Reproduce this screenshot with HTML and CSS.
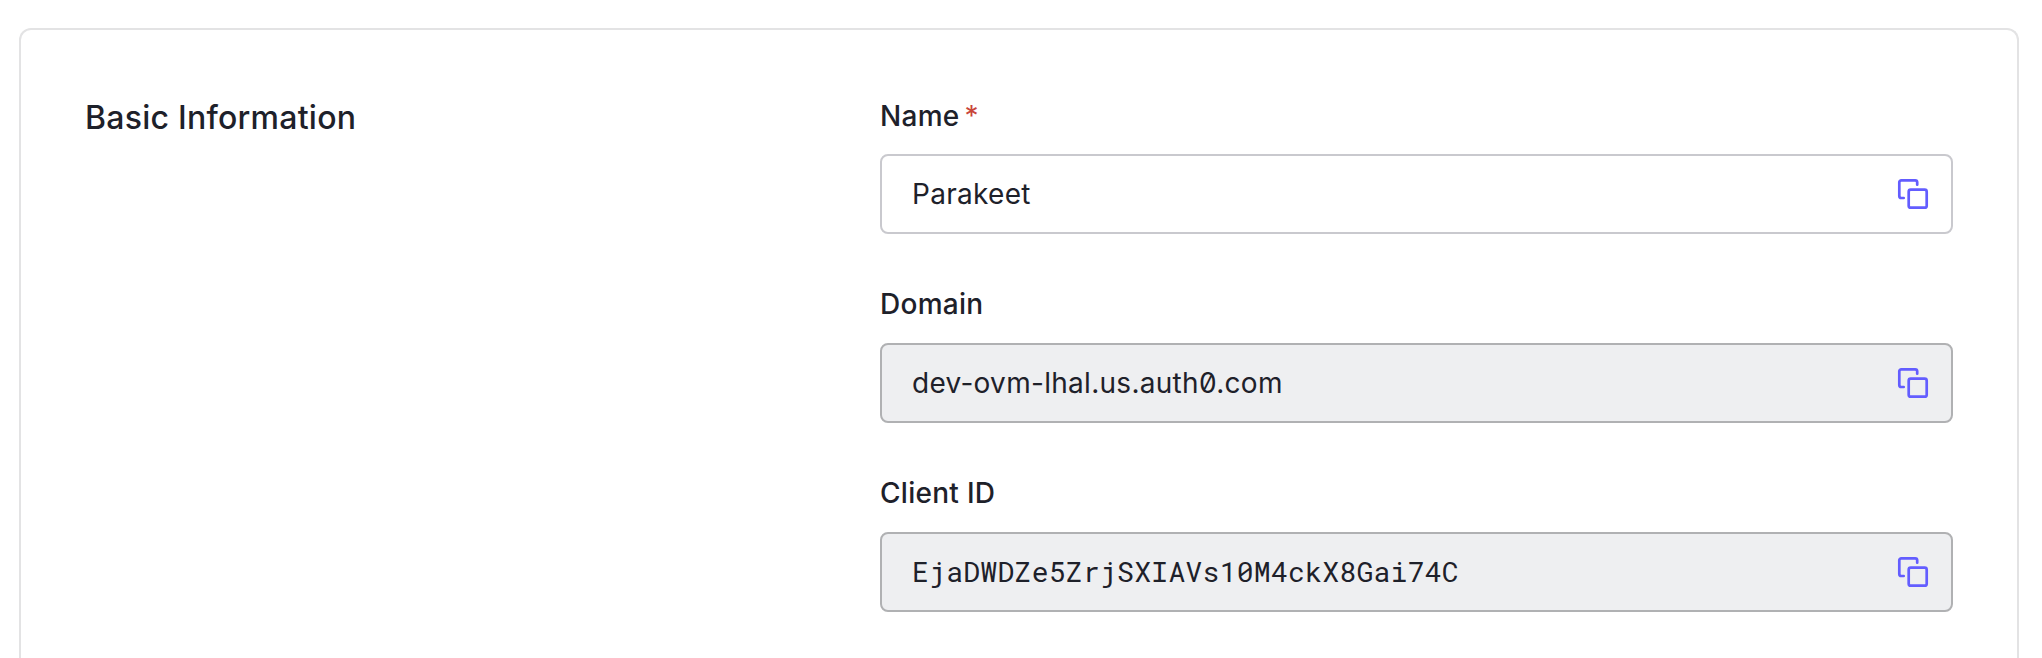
FILE: index.html
```html
<!DOCTYPE html>
<html lang="en">
<head>
<meta charset="utf-8">
<title>Basic Information</title>
<link rel="stylesheet" href="styles.css">
</head>
<body>
<main class="card">
  <h2 class="title">Basic Information</h2>
  <div class="fields">
    <section class="field">
      <div class="label">Name<span class="required">*</span></div>
      <div class="input"><span class="value">Parakeet</span><svg class="copy" viewBox="0 0 32 32"><rect x="11.7" y="11.7" width="18" height="18" rx="2"/><path d="M20.2 6.7V4.3a2 2 0 0 0-2-2H4.3a2 2 0 0 0-2 2V18a2 2 0 0 0 2 2h2.4"/></svg></div>
    </section>
    <section class="field">
      <div class="label">Domain</div>
      <div class="input readonly"><span class="value">dev-ovm-lhal.us.auth0.com</span><svg class="copy" viewBox="0 0 32 32"><rect x="11.7" y="11.7" width="18" height="18" rx="2"/><path d="M20.2 6.7V4.3a2 2 0 0 0-2-2H4.3a2 2 0 0 0-2 2V18a2 2 0 0 0 2 2h2.4"/></svg></div>
    </section>
    <section class="field">
      <div class="label">Client ID</div>
      <div class="input readonly"><span class="value mono">EjaDWDZe5ZrjSXIAVs10M4ckX8Gai74C</span><svg class="copy" viewBox="0 0 32 32"><rect x="11.7" y="11.7" width="18" height="18" rx="2"/><path d="M20.2 6.7V4.3a2 2 0 0 0-2-2H4.3a2 2 0 0 0-2 2V18a2 2 0 0 0 2 2h2.4"/></svg></div>
    </section>
  </div>
</main>
</body>
</html>
```
FILE: styles.css
```css
* { box-sizing: border-box; }
body {
  margin: 0;
  height: 658px;
  padding: 28px 23px 0 19px;
  background: #fff;
  color: #1e212a;
  font-family: Inter, "Liberation Sans", sans-serif;
}
.card {
  height: 630px;
  border: 2px solid #e3e3e4;
  border-bottom: 0;
  border-radius: 12px 12px 0 0;
  padding: 64px 64px 0;
  display: grid;
  grid-template-columns: 795px 1fr;
}
.title { margin: 4px 0 0; font-size: 32px; line-height: 40px; font-weight: 500; letter-spacing: 0.25px; }
.fields { display: flex; flex-direction: column; gap: 49px; }
.label { height: 60px; font-size: 28px; line-height: 44px; font-weight: 500; letter-spacing: 0.28px; }
.field + .field .label { line-height: 43px; }
.required { margin-left: 5px; color: #c9473a; font-weight: 400; }
.input {
  height: 80px;
  border: 2px solid #c9c9ce;
  border-radius: 8px;
  padding: 0 22px 0 30px;
  display: flex;
  align-items: center;
  justify-content: space-between;
  font-size: 28px;
}
.readonly { background: #eeeff1; border-color: #b0b1b3; }
.value { font-feature-settings: "zero"; letter-spacing: 0.29px; }
.mono { padding-bottom: 2px; font-family: "Roboto Mono", "DejaVu Sans Mono", monospace; }
.copy { width: 32px; height: 32px; fill: none; stroke: #635dff; stroke-width: 2.7; stroke-linecap: round; stroke-linejoin: round; }
```
